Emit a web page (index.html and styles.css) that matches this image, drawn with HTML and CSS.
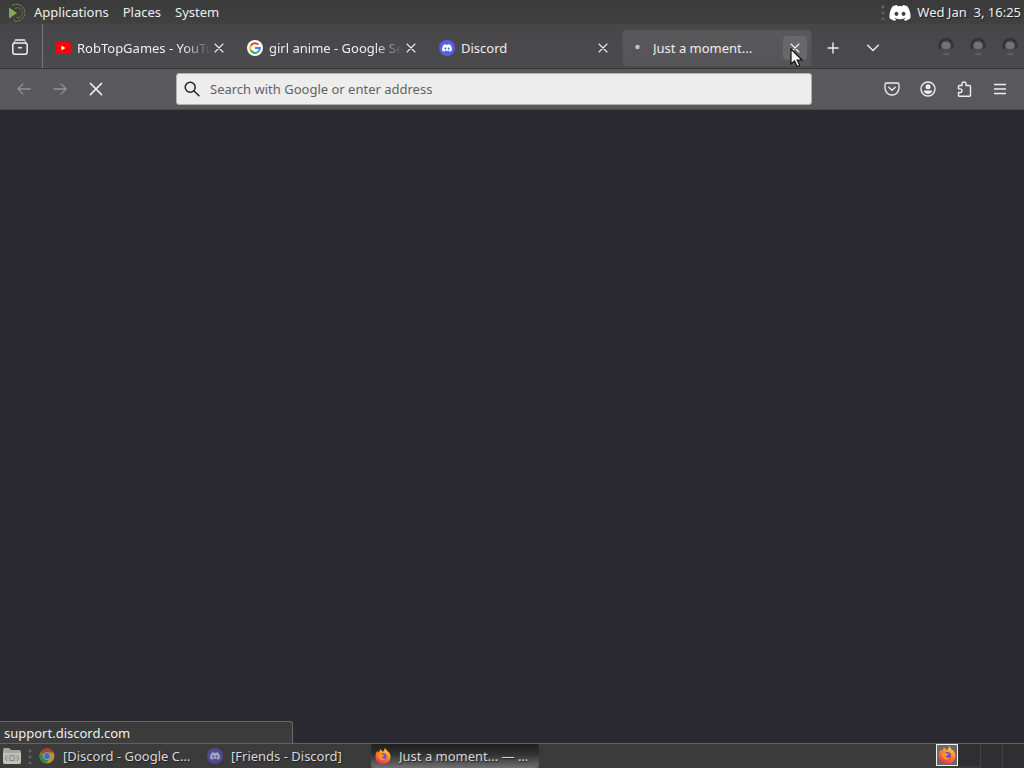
FILE: index.html
```html
<!DOCTYPE html>
<html lang="en">
<head>
<meta charset="utf-8">
<title>Just a moment...</title>
<link rel="stylesheet" href="styles.css">
</head>
<body>
<svg class="defs" aria-hidden="true">
  <defs>
    <symbol id="close" viewBox="0 0 10 10"><path d="M1 1l8 8M9 1L1 9" fill="none" stroke="currentColor" stroke-width="1.1" stroke-linecap="round"/></symbol>
    <symbol id="clyde" viewBox="0 0 24 18"><path fill-rule="evenodd" d="M20.3 1.5A20 20 0 0 0 15.4 0l-.7 1.3a18 18 0 0 0-5.4 0L8.600 0a20 20 0 0 0-4.900 1.500C.6 6.100-.2 10.600.2 15a20 20 0 0 0 6 3l1.300-2.100-2-.9.500-.4a14 14 0 0 0 12 0l.5.4-2 .9L17.800 18a20 20 0 0 0 6-3c.5-5.100-.8-9.500-3.500-13.500zM8 12.300c-1.200 0-2.200-1.100-2.200-2.400S6.800 7.500 8 7.500s2.200 1.100 2.200 2.400S9.200 12.300 8 12.300zm8 0c-1.200 0-2.200-1.100-2.200-2.400s1-2.400 2.200-2.400 2.200 1.100 2.200 2.400-1 2.400-2.200 2.400z" fill="currentColor"/></symbol>
    <linearGradient id="flame" x1=".8" y1="0" x2=".3" y2="1"><stop offset="0" stop-color="#ffe14a"/><stop offset=".45" stop-color="#ff8a25"/><stop offset="1" stop-color="#f0285a"/></linearGradient>
    <symbol id="firefox" viewBox="0 0 18 18"><path d="M11 0c1.500 1.300 2 2.300 2.300 3.200C16 4.500 17.500 7 17.500 10A8.500 8 0 0 1 .5 10C.5 7 1.500 5 3 3c0 1 .3 1.500.8 2C5 4 5.500 3 5.600 1.500 7 2.200 8 3 8.600 4.300 10 3.500 11 2 11 0z" fill="url(#flame)"/><circle cx="9" cy="10" r="4" fill="#7542e5"/><path d="M4 7c2-1.500 4-.7 5 .5 1 .2 1.500.7 1.500 1.200-1 .9-2 .8-2.400 1.500-.2 1.300 2 2.300 4.400 1-1 2.500-3.500 3.300-5.700 2.400C4.500 12.700 3.500 10 4 7z" fill="#ff9328"/></symbol>
    <symbol id="orb" viewBox="0 0 16 20"><circle cx="8" cy="8" r="5" fill="#515154"/><path d="M2.500 11.500A6.300 6.300 0 1 1 13.500 11.500" fill="none" stroke="#343436" stroke-width="2.600"/><ellipse cx="8" cy="8.500" rx="4.500" ry="3.500" fill="#737376"/><path d="M5 17h6" stroke="#5f5f61" stroke-width="2"/></symbol>
  </defs>
</svg>

<header class="panel">
  <svg class="distro" width="20" height="20" viewBox="0 0 20 20"><path d="M1 5.500v11l8-5.500z" fill="#87a556"/><path d="M4 3.500a8.500 8.500 0 1 1 1 15" fill="none" stroke="#718b4a" stroke-width="1" stroke-dasharray="3 .8"/><path d="M7 6.500a5 5 0 1 1 1 9" fill="none" stroke="#718b4a" stroke-dasharray="2 .8"/></svg>
  <nav class="menus"><button>Applications</button><button>Places</button><button>System</button></nav>
  <span class="grip"></span>
  <svg class="tray" width="22" height="16"><use href="#clyde"/></svg>
  <time class="clock">Wed Jan&nbsp; 3, 16:25</time>
</header>

<main class="browser">
  <div class="tabstrip">
    <button class="view" aria-label="View recent browsing"><svg width="16" height="16" viewBox="0 0 16 16" fill="none" stroke="currentColor" stroke-width="1.500" stroke-linecap="round"><path d="M3.500 1h9"/><rect x=".8" y="4" width="14.400" height="11.200" rx="2.200"/><path d="M1.500 5L3 2M14.500 5L13 2" stroke-width="1"/><path d="M6.700 8.800h2.600"/></svg></button>
    <div class="tabs">
      <div class="tab">
        <svg class="favicon" viewBox="0 0 16 16"><rect y="2" width="16" height="12" rx="3.500" fill="#f00"/><path d="M6.400 5.700v4.600L10.500 8z" fill="#fff"/></svg>
        <span class="title fade">RobTopGames - YouTube</span>
        <button class="close" aria-label="Close tab"><svg width="10" height="10"><use href="#close"/></svg></button>
      </div>
      <div class="tab">
        <svg class="favicon" viewBox="0 0 16 16"><circle cx="8" cy="8" r="8" fill="#fff"/><g fill="none" stroke-width="2"><path d="M3.700 5.700A4.900 4.900 0 0 1 11.500 4.600" stroke="#ea4335"/><path d="M3.800 5.500a4.900 4.900 0 0 0 0 5" stroke="#fbbc05"/><path d="M3.700 10.300a4.900 4.900 0 0 0 7.500 1.400" stroke="#34a853"/><path d="M8 8.100h4.900a4.900 4.900 0 0 1-1.700 3.600" stroke="#4285f4"/></g></svg>
        <span class="title fade">girl anime - Google Search</span>
        <button class="close" aria-label="Close tab"><svg width="10" height="10"><use href="#close"/></svg></button>
      </div>
      <div class="tab">
        <svg class="favicon" viewBox="0 0 16 16"><circle cx="8" cy="8" r="8" fill="#5560e8"/><use href="#clyde" x="3" y="4" width="10" height="8" color="#fff"/></svg>
        <span class="title">Discord</span>
        <button class="close" aria-label="Close tab"><svg width="10" height="10"><use href="#close"/></svg></button>
      </div>
      <div class="tab active">
        <svg class="favicon" viewBox="0 0 16 16"><circle cx="6.500" cy="7" r="2.200" fill="#c4c4c6"/></svg>
        <span class="title">Just a moment...</span>
        <button class="close hover" aria-label="Close tab"><svg width="10" height="10"><use href="#close"/></svg>
          <svg class="cursor" width="14" height="20" viewBox="0 0 14 20"><path d="M1 1v15l3.500-3 2.700 5.500 2.500-1.200L7.200 12H12z" fill="#f4f4f4" stroke="#111" stroke-width="1.200"/></svg></button>
      </div>
    </div>
    <button class="tool" aria-label="New tab"><svg width="12" height="12" viewBox="0 0 12 12"><path d="M6 .5v11M.5 6h11" stroke="currentColor" stroke-width="1.400"/></svg></button>
    <button class="tool list" aria-label="List all tabs"><svg width="12" height="8" viewBox="0 0 12 8"><path d="M.7 1.200L6 6.500l5.300-5.300" fill="none" stroke="currentColor" stroke-width="1.400" stroke-linecap="round"/></svg></button>
    <div class="controls"><button aria-label="Minimize"><svg width="16" height="20"><use href="#orb"/></svg></button><button aria-label="Maximize"><svg width="16" height="20"><use href="#orb"/></svg></button><button aria-label="Close"><svg width="16" height="20"><use href="#orb"/></svg></button></div>
  </div>

  <div class="toolbar">
    <button class="tool dim" aria-label="Back"><svg width="14" height="12" viewBox="0 0 14 12" fill="none" stroke="currentColor" stroke-width="1.300" stroke-linecap="round" stroke-linejoin="round"><path d="M13.300 6H.9M6 .9L.9 6 6 11.100"/></svg></button>
    <button class="tool dim" aria-label="Forward"><svg width="14" height="12" viewBox="0 0 14 12" fill="none" stroke="currentColor" stroke-width="1.300" stroke-linecap="round" stroke-linejoin="round"><path d="M.7 6h12.400M8 .9L13.100 6 8 11.100"/></svg></button>
    <button class="tool" aria-label="Stop"><svg width="14" height="14" viewBox="0 0 10 10"><use href="#close"/></svg></button>
    <div class="address">
      <svg width="16" height="16" viewBox="0 0 16 16" fill="none" stroke="#222" stroke-width="1.500" stroke-linecap="round"><circle cx="6.200" cy="6.200" r="5"/><path d="M10 10l5 4.800"/></svg>
      <input type="text" aria-label="Address" placeholder="Search with Google or enter address">
    </div>
    <button class="tool" aria-label="Save to Pocket"><svg width="16" height="16" viewBox="0 0 16 16" fill="none" stroke="currentColor" stroke-width="1.300" stroke-linecap="round" stroke-linejoin="round"><path d="M2.500 2h11A1.500 1.500 0 0 1 15 3.500V7A7 7 0 0 1 1 7V3.500A1.500 1.500 0 0 1 2.500 2z"/><path d="M4.800 6.200L8 9.200l3.200-3"/></svg></button>
    <button class="tool" aria-label="Account"><svg width="16" height="16" viewBox="0 0 16 16"><circle cx="8" cy="8" r="7" fill="none" stroke="currentColor" stroke-width="1.400"/><circle cx="8" cy="5.800" r="2.500" fill="currentColor"/><path d="M3.800 9.500h8.400c0 2-2 3.500-4.200 3.500s-4.200-1.500-4.200-3.500z" fill="currentColor"/></svg></button>
    <button class="tool" aria-label="Extensions"><svg width="16" height="16" viewBox="0 0 16 16" fill="none" stroke="currentColor" stroke-width="1.400" stroke-linejoin="round"><path d="M6 4.500V3a2 2 0 0 1 4 0v1.500h3.500q1 0 1 1v8.700q0 1-1 1h-10q-1 0-1-1v-2.700h1.700a1.800 1.800 0 0 0 0-3.600H2.500V5.500q0-1 1-1z"/></svg></button>
    <button class="tool" aria-label="Menu"><svg width="12" height="12" viewBox="0 0 12 12"><path d="M0 1.500h12M0 6h12M0 10.500h12" stroke="currentColor" stroke-width="1.400"/></svg></button>
  </div>

  <div class="page"><div class="status">support.discord.com</div></div>
</main>

<footer class="taskbar">
  <button class="files" aria-label="Show desktop"><svg width="20" height="18" viewBox="0 0 20 18"><path d="M1 3q0-2 2-2h4l2 2h8q2 0 2 2v10q0 2-2 2H3q-2 0-2-2z" fill="#a5a79f"/><path d="M1 6h18v9q0 2-2 2H3q-2 0-2-2z" fill="#c0c2ba"/><g fill="none" stroke="#85877f"><rect x="8" y="8.500" width="4" height="5"/><path d="M5 8l-2 3 2 3M15 8l2 3-2 3M6.500 11H5M15 11h-1.500"/></g></svg></button>
  <span class="grip"></span>
  <div class="tasks">
    <button class="task"><svg class="ticon" viewBox="0 0 16 16"><circle cx="8" cy="8" r="7.500" fill="#b7952e"/><path d="M8 8L1.500 4.200A7.500 7.500 0 0 1 14.500 4.200L8 5z" fill="#a8402f"/><path d="M1.500 4.200A7.500 7.500 0 0 0 7.500 15.500L10.500 9.500 5 9z" fill="#3b8550"/><circle cx="8" cy="8" r="3.800" fill="#aaa"/><circle cx="8" cy="8" r="2.900" fill="#3d6fb5"/></svg><span>[Discord - Google Chrome]</span></button>
    <button class="task"><svg class="ticon" viewBox="0 0 16 16"><circle cx="8" cy="8" r="8" fill="#4c4a91"/><use href="#clyde" x="3" y="4" width="10" height="8" color="#a5a5b8"/></svg><span>[Friends - Discord]</span></button>
    <button class="task current"><svg class="ticon"><use href="#firefox"/></svg><span>Just a moment... — Mozilla Firefox</span></button>
  </div>
  <div class="pager"><button class="desk on" aria-label="Workspace 1"><svg width="18" height="18"><use href="#firefox"/></svg></button><button class="desk" aria-label="Workspace 2"></button><button class="desk" aria-label="Workspace 3"></button></div>
</footer>
</body>
</html>
```
FILE: styles.css
```css
* { box-sizing: border-box; }
body {
  margin: 0;
  min-height: 100vh;
  display: flex;
  flex-direction: column;
  background: #2b2a33;
  color: #eee;
  font: 13px/18px "Noto Sans", sans-serif;
}
button, input { font: inherit; color: inherit; background: none; border: 0; padding: 0; margin: 0; }
button { display: flex; align-items: center; justify-content: center; flex: none; }
svg { display: block; flex: none; }
.defs { position: absolute; width: 0; height: 0; }

.panel {
  display: flex;
  align-items: center;
  height: 24px;
  padding: 0 3px 0 8px;
  background: linear-gradient(#3a3a3a, #414141);
  text-shadow: 1px 1px 1px #222;
}
.menus { display: flex; gap: 14px; margin: 0 auto 0 6px; }
.grip { width: 4px; height: 16px; background: radial-gradient(circle, #606060 1px, transparent 2px) 0 0 / 4px 6px; }
.tray { margin: 2px 6px 0 4px; color: #fff; }

.browser { flex: 1; display: flex; flex-direction: column; }
.tabstrip {
  display: flex;
  align-items: center;
  height: 45px;
  background: linear-gradient(#474749, #4b4b4e);
  border-bottom: 1px solid #353537;
}
.view { width: 43px; height: 44px; padding: 2px 2px 0 0; border-right: 1px solid #777779; }
.tabs { display: flex; flex: 0 1 770px; min-width: 0; padding: 0 0 0 2px; }
.tabs, .tabstrip .tool { margin-top: 3px; }
.tab {
  display: flex;
  align-items: center;
  flex: 1 1 0;
  min-width: 0;
  height: 36px;
  margin: 0 2px;
  padding: 0 4px 0 8px;
  border-radius: 4px;
}
.tab.active { background: linear-gradient(#59595b, #555557); box-shadow: 0 0 1px #777; }
.favicon { width: 16px; height: 16px; }
.title { flex: 1; min-width: 0; margin: 0 -4px 0 6px; overflow: hidden; white-space: nowrap; }
.fade { mask-image: linear-gradient(to right, #000 calc(100% - 28px), transparent); }
.close { position: relative; width: 24px; height: 24px; border-radius: 4px; }
.close.hover { background: #68686a; }
.cursor { position: absolute; left: 7px; top: 12px; }
.tool { width: 36px; height: 36px; }
.tabs + .tool { margin-left: 2px; }
.tabstrip .list { margin-left: 4px; }
.controls { display: flex; gap: 16px; margin: 2px 6px 0 auto; }

.toolbar {
  display: flex;
  align-items: center;
  height: 41px;
  padding: 0 6px;
  background: #59595b;
  border-bottom: 1px solid #48484b;
}
.dim { color: #929294; }
.address {
  display: flex;
  align-items: center;
  flex: 1;
  height: 32px;
  margin: 0 62px;
  padding: 0 7px;
  gap: 10px;
  background: #ededed;
  border: 1px solid #b0b0b0;
  border-radius: 3px;
}
.address input { flex: 1; min-width: 0; color: #333; outline: 0; }
.address input::placeholder { color: #626264; opacity: 1; }
.page { flex: 1; display: flex; align-items: flex-end; }
.status {
  min-width: 293px;
  padding: 2px 4px 1px;
  background: linear-gradient(#393939, #3e3e3e);
  border: solid #68686a;
  border-width: 1px 1px 0 0;
  border-radius: 0 3px 0 0;
}

.taskbar {
  display: flex;
  align-items: center;
  height: 25px;
  padding-left: 2px;
  background: #3b3b3b;
  border-top: 1px solid #636365;
}
.files { margin-right: 6px; }
.tasks { display: flex; flex: 1; min-width: 0; margin-left: 3px; }
.task {
  flex: 0 1 168px;
  min-width: 0;
  height: 24px;
  padding: 0 8px 0 4px;
  gap: 8px;
  justify-content: flex-start;
  color: #d8d8d8;
  text-shadow: 1px 1px 1px #202020;
}
.task span { overflow: hidden; white-space: nowrap; text-overflow: ellipsis; }
.ticon { width: 16px; height: 16px; }
.task.current { background: linear-gradient(#1e1e1e, #333 45%, #707070); border-radius: 3px; }
.pager { display: flex; }
.desk { width: 22px; height: 24px; background: #2f2f31; border-left: 1px solid #414143; }
.desk.on { background: #68686a; border: 1px solid #f1f1ed; height: 22px; margin-right: 22px; box-shadow: 22px 0 #2f2f31; }
```
